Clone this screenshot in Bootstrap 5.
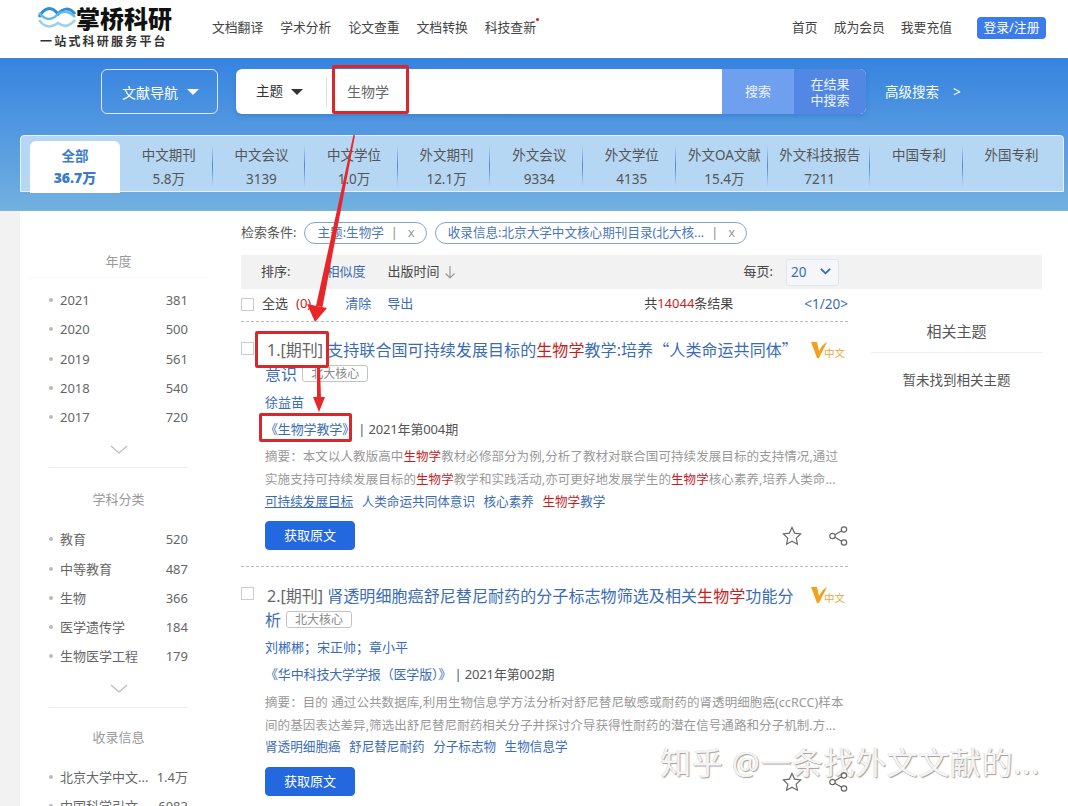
<!DOCTYPE html>
<html lang="zh">
<head>
  <meta charset="utf-8">
  <title>掌桥科研</title>
  <link href="https://cdn.jsdelivr.net/npm/bootstrap@5.3.0/dist/css/bootstrap.min.css" rel="stylesheet">
  <style>
    html, body { height: 806px; overflow: hidden; }
    body { font-family: "Noto Sans", "Noto Sans CJK SC", sans-serif; font-size: 13px; color: #444; background: #f2f2f2; }
    a { text-decoration: none; color: #3a6cb4; }
    .page { width: 1068px; height: 806px; overflow: hidden; }

    .top { height: 58px; background: #fff; padding: 0 22px 2px 38px; font-size: 12.8px; }
    .logo { width: 174px; height: 56px; }
    .logo-name { left: 38px; top: 3px; font-size: 24px; font-weight: 900; color: #111; line-height: 32px; }
    .logo-sub { left: 2px; top: 32px; font-size: 12px; font-weight: 700; color: #333; letter-spacing: 2.2px; line-height: 18px; white-space: nowrap; font-family: "Noto Sans CJK SC", sans-serif; }
    .logo svg { left: 0; top: 4px; }
    .top-nav { gap: 17px; }
    .top-nav a, .top-right a { color: #444; white-space: nowrap; }
    .dot { width: 3px; height: 3px; border-radius: 50%; background: #d01c1c; right: -3px; top: 0; }
    .top-right { gap: 16px; }
    .login { background: #3b7cec; color: #fff !important; border-radius: 4px; height: 22px; width: 69px; line-height: 21px; text-align: center; margin-left: 9px; }

    .band { height: 153px; background: linear-gradient(#3683e0, #72b0e0); border-bottom: 1px solid #7fb3d8; padding-top: 11px; }
    .search-row { padding-left: 101px; height: 45px; }
    .lit-btn { width: 117px; height: 45px; border: 1px solid #dfeafa; border-radius: 6px; color: #fff; font-size: 14px; gap: 9px; padding: 1px 0 0 2px; }
    .caret { width: 0; height: 0; border-left: 6px solid transparent; border-right: 6px solid transparent; border-top: 6px solid #fff; }
    .caret.dark { border-top-color: #333; }
    .search-box { width: 630px; height: 45px; margin-left: 18px; background: #fff; border-radius: 6px; overflow: hidden; box-shadow: 0 2px 4px rgba(30,80,150,.25); }
    .field-pick { width: 90px; padding-left: 20px; gap: 8px; color: #333; font-size: 13.5px; }
    .split { width: 1px; height: 30px; background: #ddd; }
    .search-text { padding-left: 20px; color: #666; font-size: 14px; }
    .go { width: 72px; background: #6fa0f0; color: #eef4ff; font-size: 13px; }
    .go.in { background: #5288e4; line-height: 16px; text-align: center; }
    .adv { margin-left: 19px; color: #fff; font-size: 13.5px; padding-top: 1px; }
    .adv span { margin-left: 14px; }

    .tabs { height: 57px; margin: 21px 4px 0 20px; padding: 5px 0 0 9px; background: #b6d7f3; border: 1px solid #e6f1fb; border-radius: 4px 4px 0 0; }
    .tab { width: 92.6px; height: 52px; color: #555; font-size: 13.5px; line-height: 24px; text-align: center; padding: 2px 0 0 5px; white-space: nowrap;
      background: linear-gradient(transparent, #4d88d4 50%, transparent) right 4px / 1px 42px no-repeat; }
    .tab.on { width: 90px; background: #fff; border-radius: 6px 6px 0 0; color: #3a7cc8; font-weight: 700; padding-left: 0; padding-top: 4px; line-height: 22px; }
    .tab.wide { width: 102px; padding-left: 1px; }
    .tab.last { background: none; }
    .tab b { display: block; font-size: 14px; }

    .body-wrap { background: #fff; margin-left: 20px; height: 595px; }
    .side { width: 210px; padding: 0 42px 0 29px; }
    .side h6 { font-size: 13px; font-weight: 400; color: #999; text-align: center; margin: 0; height: 20px; line-height: 20px; }
    .side .first { padding-top: 40px; }
    .side .h-rule { border-bottom: 1px solid #f8f8f8; margin: 0 -20px; padding-bottom: 6px; }
    .side .second { margin: 21px 0 16px; }
    .side .third { margin: 19px 0 16px; }
    .side-rows { margin: 0; padding: 0; list-style: none; }
    .side-rows li { height: 29.25px; line-height: 29px; color: #666; position: relative; padding-left: 11px; white-space: nowrap; }
    .side-rows li::before { content: ""; position: absolute; left: 0; top: 12px; width: 4px; height: 4px; border-radius: 50%; background: #bbb; }
    .more { height: 35px; }
    .side-block { border-bottom: 1px solid #eee; }

    .main { width: 801px; margin-left: 11px; }
    .cond { height: 44px; padding-top: 11px; font-size: 13px; color: #555; }
    .cond > span:first-child { line-height: 20px; }
    .pill { height: 22px; border: 1px solid #7fa6cc; border-radius: 11px; color: #4a78b8; font-size: 12.6px; padding: 0 11px 0 12px; margin-left: 8px; white-space: nowrap; }
    .pill em { font-style: normal; color: #888; margin: 0 10px 0 7px; }
    .pill u { text-decoration: none; color: #999; font-size: 13px; }
    .sort { height: 34px; background: #f2f2f2; padding-left: 20px; font-size: 13px; }
    .sort .sim { margin-left: 36px; }
    .sort .pub { margin-left: 22px; }
    .sort .form-select { width: 53px; height: 27px; padding: 0 0 0 4px; margin: 0 203px 0 13px; border: 1px solid #dfe6ee; border-radius: 3px; font-size: 13.5px; color: #3a6cb4; background-color: #f4f6f9;
      background-image: url("data:image/svg+xml,%3csvg xmlns='http://www.w3.org/2000/svg' viewBox='0 0 12 8'%3e%3cpath d='M1 1l5 5 5-5' fill='none' stroke='%232a6ac0' stroke-width='2'/%3e%3c/svg%3e"); background-position: right 7px center; background-size: 11px; }
    .results { width: 607px; }
    .opts { height: 33px; padding-bottom: 2px; font-size: 13px; border-bottom: 1px dashed #bbb; }
    .opts .clear { margin-left: 34px; }
    .pager { margin-left: 71px; font-size: 13.5px; }
    .form-check-input.box { width: 13px; height: 13px; margin: 0; border-radius: 0; border-color: #ccc; flex: none; }
    .item { position: relative; padding: 15px 0 0 24px; border-bottom: 1px dashed #bbb; height: 245px; }
    .item .box { position: absolute; left: 0; top: 20px; }
    .ttl { font-size: 16px; line-height: 24px; width: 538px; color: #3a6cb4; margin: 0; letter-spacing: .08px; }
    .ttl .no { color: #666; padding-left: 2px; letter-spacing: 0; }
    .ttl .q { font-family: "Noto Sans CJK SC", sans-serif; }
    .hl { color: #c41e1e; }
    .vtag { position: absolute; right: 3px; top: 19px; color: #e8a93e; font-size: 10.5px; line-height: 12px; }
    .vtag span { margin: 6px 0 0 -3px; }
    .core { display: inline-block; border: 1px solid #c4c4c4; border-radius: 3px; font-size: 12px; line-height: 15px; padding: 0 8px; color: #888; margin-left: 5px; vertical-align: 2px; letter-spacing: 0; }
    .auth { margin-top: 6px; line-height: 20px; }
    .jour { margin-top: 7px; line-height: 20px; color: #555; letter-spacing: -.15px; }
    .abs { margin-top: 6px; font-size: 12.5px; line-height: 23px; color: #999; width: 580px; white-space: nowrap; overflow: hidden; letter-spacing: .08px; }
    .keys { margin-top: 1px; line-height: 20px; gap: 8.5px; white-space: nowrap; font-size: 12.6px; }
    .fetch { width: 90px; height: 29px; margin-top: 9px; padding: 0; background: #2468e0; border-color: #2468e0; border-radius: 4px; font-size: 13px; }
    .item + .item { padding-top: 17px; }
    .item + .item .auth { margin-top: 5px; }
    .item + .item .abs { margin-top: 7px; }
    .item + .item .keys { margin-top: 0; }
    .item + .item .fetch { margin-top: 10px; }
    .acts { position: absolute; right: 0; bottom: 20px; gap: 27px; z-index: 7; }
    .rel { width: 171px; margin-left: 23px; padding-top: 31px; text-align: center; }
    .rel h6 { font-size: 15px; font-weight: 400; color: #555; margin: 0; padding-bottom: 10px; border-bottom: 1px solid #eee; line-height: 22px; }
    .rel p { margin: 17px 0 0; color: #555; font-size: 13.5px; }

    .marks { left: 0; top: 0; pointer-events: none; z-index: 5; }
    .redbox { position: absolute; border: 3px solid #d9282c; border-radius: 2px; z-index: 5; }
    .box-a { left: 332px; top: 65px; width: 77px; height: 49px; }
    .box-b { left: 255px; top: 331px; width: 74px; height: 37px; }
    .box-c { left: 259px; top: 413px; width: 93px; height: 29px; }
    .wm { right: 28px; top: 740px; font-size: 31px; line-height: 44px; color: #f4f4f4; text-shadow: 1px 1px 1px #a0a0a0, -.5px -.5px 0 #d8d8d8; letter-spacing: .6px; white-space: nowrap; z-index: 6; }
  </style>
</head>
<body>
<div class="page position-relative">

  <div class="top d-flex align-items-center">
    <div class="logo position-relative flex-shrink-0">
      <svg class="position-absolute" width="38" height="26" viewBox="0 0 38 26">
        <path d="M1 13C6 4 13 1 20 10C25 4 31 3 37 10" fill="none" stroke="#2b8fd8" stroke-width="3"/>
        <path d="M1 9C7 16 13 17 19 11C25 6 31 7 37 13" fill="none" stroke="#63b9e8" stroke-width="2.4"/>
        <path d="M1 16C7 24 13 24 20 19C25 23 31 23 37 16" fill="none" stroke="#9ad0ef" stroke-width="2.6"/>
      </svg>
      <div class="logo-name position-absolute">掌桥科研</div>
      <div class="logo-sub position-absolute">一站式科研服务平台</div>
    </div>
    <nav class="top-nav d-flex">
      <a href="#">文档翻译</a><a href="#">学术分析</a><a href="#">论文查重</a><a href="#">文档转换</a>
      <a href="#" class="position-relative">科技查新<span class="dot position-absolute"></span></a>
    </nav>
    <div class="top-right d-flex align-items-center ms-auto">
      <a href="#">首页</a><a href="#">成为会员</a><a href="#">我要充值</a>
      <a href="#" class="login">登录/注册</a>
    </div>
  </div>

  <div class="band">
    <div class="search-row d-flex align-items-center">
      <div class="lit-btn d-flex align-items-center justify-content-center">文献导航 <span class="caret"></span></div>
      <div class="search-box d-flex align-items-stretch">
        <div class="field-pick d-flex align-items-center">主题 <span class="caret dark"></span></div>
        <div class="split align-self-center"></div>
        <div class="search-text flex-grow-1 d-flex align-items-center">生物学</div>
        <div class="go d-flex align-items-center justify-content-center">搜索</div>
        <div class="go in d-flex align-items-center justify-content-center">在结果<br>中搜索</div>
      </div>
      <a href="#" class="adv">高级搜索<span>&gt;</span></a>
    </div>
    <div class="tabs d-flex">
      <div class="tab on">全部<b>36.7万</b></div>
      <div class="tab">中文期刊<br>5.8万</div>
      <div class="tab">中文会议<br>3139</div>
      <div class="tab">中文学位<br>1.0万</div>
      <div class="tab">外文期刊<br>12.1万</div>
      <div class="tab">外文会议<br>9334</div>
      <div class="tab">外文学位<br>4135</div>
      <div class="tab">外文OA文献<br>15.4万</div>
      <div class="tab wide">外文科技报告<br>7211</div>
      <div class="tab">中国专利</div>
      <div class="tab last">外国专利</div>
    </div>
  </div>

  <div class="body-wrap d-flex">
    <aside class="side flex-shrink-0">
      <div class="side-block first">
        <div class="h-rule"><h6>年度</h6></div>
        <ul class="side-rows mt-2">
          <li class="d-flex justify-content-between"><span>2021</span><span>381</span></li>
          <li class="d-flex justify-content-between"><span>2020</span><span>500</span></li>
          <li class="d-flex justify-content-between"><span>2019</span><span>561</span></li>
          <li class="d-flex justify-content-between"><span>2018</span><span>540</span></li>
          <li class="d-flex justify-content-between"><span>2017</span><span>720</span></li>
        </ul>
        <div class="more d-flex align-items-center justify-content-center">
          <svg width="18" height="10" viewBox="0 0 18 10"><path d="M1 1l8 7 8-7" fill="none" stroke="#bbb" stroke-width="1.2"/></svg>
        </div>
      </div>
      <div class="side-block">
        <h6 class="second">学科分类</h6>
        <ul class="side-rows">
          <li class="d-flex justify-content-between"><span>教育</span><span>520</span></li>
          <li class="d-flex justify-content-between"><span>中等教育</span><span>487</span></li>
          <li class="d-flex justify-content-between"><span>生物</span><span>366</span></li>
          <li class="d-flex justify-content-between"><span>医学遗传学</span><span>184</span></li>
          <li class="d-flex justify-content-between"><span>生物医学工程</span><span>179</span></li>
        </ul>
        <div class="more d-flex align-items-center justify-content-center">
          <svg width="18" height="10" viewBox="0 0 18 10"><path d="M1 1l8 7 8-7" fill="none" stroke="#bbb" stroke-width="1.2"/></svg>
        </div>
      </div>
      <div>
        <h6 class="third">收录信息</h6>
        <ul class="side-rows">
          <li class="d-flex justify-content-between"><span>北京大学中文...</span><span>1.4万</span></li>
          <li class="d-flex justify-content-between"><span>中国科学引文...</span><span>6083</span></li>
        </ul>
      </div>
    </aside>

    <main class="main">
      <div class="cond d-flex align-items-start">
        <span>检索条件:</span>
        <span class="pill d-inline-flex align-items-center">主题:生物学<em>|</em><u>x</u></span>
        <span class="pill d-inline-flex align-items-center">收录信息:北京大学中文核心期刊目录(北大核...<em>|</em><u>x</u></span>
      </div>
      <div class="sort d-flex align-items-center">
        <span>排序:</span>
        <a href="#" class="sim">相似度</a>
        <span class="pub">出版时间</span>
        <svg class="ms-1" width="12" height="14" viewBox="0 0 12 14"><path d="M6 1v12M1.5 8.5L6 13l4.5-4.5" fill="none" stroke="#999" stroke-width="1.2"/></svg>
        <span class="ms-auto">每页:</span>
        <select class="form-select"><option>20</option></select>
      </div>
      <div class="d-flex">
        <div class="results flex-shrink-0">
          <div class="opts d-flex align-items-center">
            <input class="form-check-input box" type="checkbox">
            <span class="ms-2">全选</span><span class="hl ms-2">(0)</span>
            <a href="#" class="clear">清除</a><a href="#" class="ms-3">导出</a>
            <span class="ms-auto"><span>共</span><span class="hl">14044</span>条结果</span>
            <a href="#" class="pager">&lt;1/20&gt;</a>
          </div>

          <article class="item">
            <input class="form-check-input box" type="checkbox">
            <p class="ttl"><span class="no">1.[期刊]</span> 支持联合国可持续发展目标的<span class="hl">生物学</span>教学:培养<span class="q">“</span>人类命运共同体<span class="q">”</span>意识<span class="core">北大核心</span></p>
            <span class="vtag d-flex align-items-start"><svg width="16" height="17" viewBox="0 0 16 17"><path d="M0 1H6L8 10C10 6 12 3 16 1L8 17H6Z" fill="#f0a21e"/></svg><span>中文</span></span>
            <div class="auth"><a href="#">徐益苗</a></div>
            <div class="jour"><a href="#">《生物学教学》</a> | 2021年第004期</div>
            <div class="abs">摘要：本文以人教版高中<span class="hl">生物学</span>教材必修部分为例,分析了教材对联合国可持续发展目标的支持情况,通过<br>实施支持可持续发展目标的<span class="hl">生物学</span>教学和实践活动,亦可更好地发展学生的<span class="hl">生物学</span>核心素养,培养人类命...</div>
            <div class="keys d-flex"><a href="#" class="text-decoration-underline">可持续发展目标</a><a href="#">人类命运共同体意识</a><a href="#">核心素养</a><a href="#"><span class="hl">生物学</span>教学</a></div>
            <button class="btn btn-primary fetch">获取原文</button>
            <div class="acts d-flex align-items-center">
              <svg width="20" height="20" viewBox="0 0 20 20"><path d="M10 1.5l2.6 5.6 6.1.8-4.5 4.2 1.2 6.1L10 15.2l-5.4 3 1.2-6.1L1.3 7.9l6.1-.8z" fill="none" stroke="#666" stroke-width="1.2"/></svg>
              <svg width="19" height="20" viewBox="0 0 19 20"><g fill="none" stroke="#666" stroke-width="1.2"><circle cx="3.5" cy="10" r="2.7"/><circle cx="15" cy="3.5" r="2.7"/><circle cx="15" cy="16.5" r="2.7"/><path d="M5.9 8.7l6.8-3.9M5.9 11.3l6.8 3.9"/></g></svg>
            </div>
          </article>

          <article class="item border-0">
            <input class="form-check-input box" type="checkbox">
            <p class="ttl"><span class="no">2.[期刊]</span> 肾透明细胞癌舒尼替尼耐药的分子标志物筛选及相关<span class="hl">生物学</span>功能分析<span class="core">北大核心</span></p>
            <span class="vtag d-flex align-items-start"><svg width="16" height="17" viewBox="0 0 16 17"><path d="M0 1H6L8 10C10 6 12 3 16 1L8 17H6Z" fill="#f0a21e"/></svg><span>中文</span></span>
            <div class="auth"><a href="#">刘郴郴；宋正帅；章小平</a></div>
            <div class="jour"><a href="#">《华中科技大学学报（医学版）》</a> | 2021年第002期</div>
            <div class="abs">摘要：目的 通过公共数据库,利用生物信息学方法分析对舒尼替尼敏感或耐药的肾透明细胞癌(ccRCC)样本<br>间的基因表达差异,筛选出舒尼替尼耐药相关分子并探讨介导获得性耐药的潜在信号通路和分子机制.方...</div>
            <div class="keys d-flex"><a href="#">肾透明细胞癌</a><a href="#">舒尼替尼耐药</a><a href="#">分子标志物</a><a href="#">生物信息学</a></div>
            <button class="btn btn-primary fetch">获取原文</button>
            <div class="acts d-flex align-items-center">
              <svg width="20" height="20" viewBox="0 0 20 20"><path d="M10 1.5l2.6 5.6 6.1.8-4.5 4.2 1.2 6.1L10 15.2l-5.4 3 1.2-6.1L1.3 7.9l6.1-.8z" fill="none" stroke="#666" stroke-width="1.2"/></svg>
              <svg width="19" height="20" viewBox="0 0 19 20"><g fill="none" stroke="#666" stroke-width="1.2"><circle cx="3.5" cy="10" r="2.7"/><circle cx="15" cy="3.5" r="2.7"/><circle cx="15" cy="16.5" r="2.7"/><path d="M5.9 8.7l6.8-3.9M5.9 11.3l6.8 3.9"/></g></svg>
            </div>
          </article>
        </div>
        <div class="rel">
          <h6>相关主题</h6>
          <p>暂未找到相关主题</p>
        </div>
      </div>
    </main>
  </div>

  <!-- red annotations drawn over the screenshot -->
  <div class="redbox box-a"></div>
  <div class="redbox box-b"></div>
  <div class="redbox box-c"></div>
  <svg class="marks position-absolute" width="1068" height="806" viewBox="0 0 1068 806">
    <path d="M353.4 135L355 135.3L322.5 307L316 306Z" fill="#e8262a"/>
    <path d="M307 304L327 308L315 322Z" fill="#e8262a"/>
    <path d="M317 367L320 367L321 398L317 398Z" fill="#e8262a"/>
    <path d="M313 397L325 397L319 412Z" fill="#e8262a"/>
  </svg>
  <div class="wm position-absolute">知乎 @一条找外文文献的...</div>
</div>
<script src="https://cdn.jsdelivr.net/npm/bootstrap@5.3.0/dist/js/bootstrap.bundle.min.js"></script>
</body>
</html>
